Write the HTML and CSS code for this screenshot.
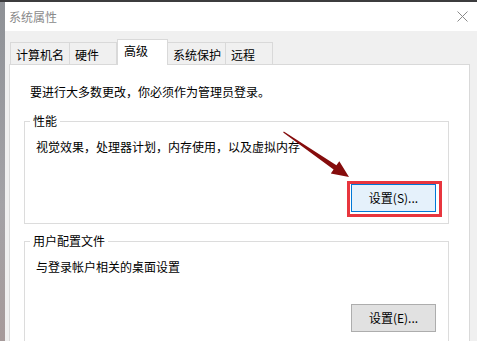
FILE: index.html
```html
<!DOCTYPE html>
<html lang="zh-CN">
<head>
<meta charset="utf-8">
<title>系统属性</title>
<link rel="stylesheet" href="styles.css">
</head>
<body>
<div class="screen">
  <div class="window">
    <div class="titlebar">
      <span class="title">系统属性</span>
      <svg class="close" width="11" height="11" viewBox="0 0 11 11" aria-label="关闭">
        <path d="M0.5 0.5 L10.5 10.5 M10.5 0.5 L0.5 10.5" stroke="#8a8a8a" stroke-width="1" fill="none"/>
      </svg>
    </div>
    <div class="client">
      <div class="tabs">
        <div class="tab tab-name">计算机名</div>
        <div class="tab tab-hw">硬件</div>
        <div class="tab tab-adv active">高级</div>
        <div class="tab tab-prot">系统保护</div>
        <div class="tab tab-remote">远程</div>
      </div>
      <div class="panel">
        <p class="intro">要进行大多数更改，你必须作为管理员登录。</p>
        <fieldset class="group">
          <legend>性能</legend>
          <p class="desc">视觉效果，处理器计划，内存使用，以及虚拟内存</p>
          <div class="actions">
            <span class="highlight"><button class="btn focused">设置(S)...</button></span>
          </div>
        </fieldset>
        <fieldset class="group group-profile">
          <legend>用户配置文件</legend>
          <p class="desc">与登录帐户相关的桌面设置</p>
          <div class="actions">
            <button class="btn">设置(E)...</button>
          </div>
        </fieldset>
      </div>
    </div>
  </div>
  <svg class="arrow" width="477" height="341" viewBox="0 0 477 341">
    <polygon points="283.8,131.4 336.4,165.3 339.3,161.2 349,177 330.8,173.6 333.6,169.5 283.2,132.4" fill="#850c0c"/>
  </svg>
</div>
</body>
</html>
```
FILE: styles.css
```css
* { box-sizing: border-box; }
html, body { margin: 0; height: 100%; }
body {
  font-family: "Noto Sans CJK SC", "Microsoft YaHei", sans-serif;
  font-size: 12px;
  line-height: 14px;
  color: #000;
  overflow: hidden;
}
.screen {
  position: relative;
  width: 477px;
  height: 341px;
  overflow: hidden;
  padding: 2px 0 0 5px;
  background: linear-gradient(#3c3c3e 0 2px, transparent 2px),
              linear-gradient(#8e9196, #a3a2a6 60%, #a69a9a);
}
.window {
  height: 100%;
  display: flex;
  flex-direction: column;
  background: #f0f0f0;
}
.titlebar {
  height: 29px;
  flex: none;
  background: #fff;
  display: flex;
  align-items: center;
  justify-content: space-between;
  padding: 0 9px 0 4px;
}
.title { color: #8a8a8a; }
.close { display: block; }
.client {
  flex: 1;
  display: flex;
  flex-direction: column;
  padding: 8px 7px 0 4px;
}
.tabs {
  display: flex;
  align-items: flex-end;
  padding-left: 1px;
  flex: none;
}
.tab {
  height: 22px;
  border: 1px solid #d9d9d9;
  border-bottom: none;
  background: #f0f0f0;
  padding: 5px 0 0 5px;
  white-space: nowrap;
}
.tab + .tab { margin-left: -1px; }
.tab-name { width: 60px; }
.tab-hw { width: 48px; }
.tab-adv { width: 51px; }
.tab-prot { width: 59px; }
.tab-remote { width: 48px; }
.tab.active {
  position: relative;
  z-index: 1;
  height: 26px;
  margin-bottom: -1px;
  margin-left: 0;
  background: #fff;
  padding: 4px 0 0 6px;
}
.tab.active + .tab { margin-left: -1px; }
.panel {
  flex: 1;
  background: #fff;
  border: 1px solid #d9d9d9;
  border-bottom: none;
  padding: 20px 20px 0 14px;
}
.intro { margin: 0 0 15px 6px; }
.group {
  margin: 0;
  min-width: 0;
  border: 1px solid #dcdcdc;
  padding: 0 12px 11px 11px;
}
.group legend {
  padding: 0 3px;
  margin-left: -6px;
  line-height: 14px;
}
.group-profile { margin-top: 10px; }
.desc { margin: 12px 0 0; }
.actions {
  display: flex;
  justify-content: flex-end;
  margin-top: 30px;
}
.btn {
  width: 85px;
  height: 28px;
  border: 1px solid #adadad;
  background: #e1e1e1;
  font: inherit;
  color: #000;
  padding: 0;
}
.btn.focused {
  background: #e5f1fb;
  border-color: #0078d7;
}
.highlight {
  position: relative;
  display: flex;
}
.highlight::after {
  content: "";
  position: absolute;
  inset: -3px -6px -5px -4px;
  border: 3px solid #e8363e;
}
.arrow {
  position: absolute;
  left: 0;
  top: 0;
  pointer-events: none;
}
```
